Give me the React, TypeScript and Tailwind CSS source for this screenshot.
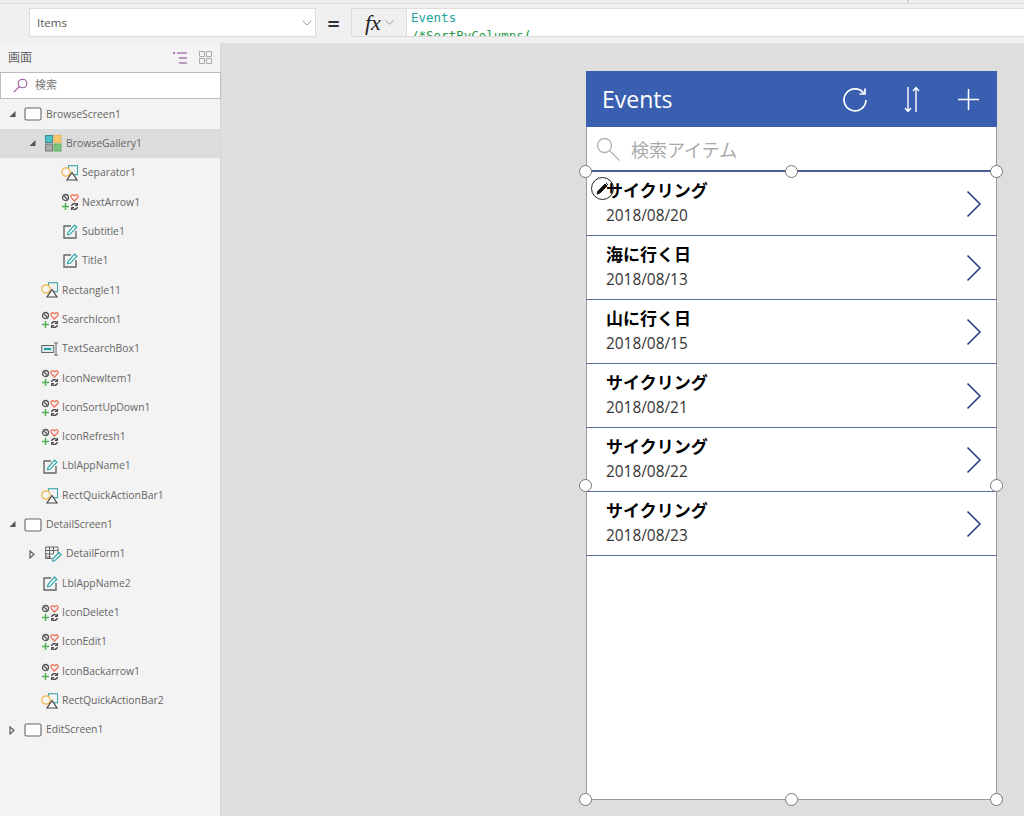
import React from 'react';
import { ChevronDown } from 'lucide-react';

type Kind = 'screen' | 'gallery' | 'shapes' | 'icons' | 'label' | 'input' | 'form';

type TreeItem = {
  name: string;
  kind: Kind;
  level: 0 | 1 | 2;
  caret?: 'open' | 'closed';
  selected?: boolean;
};

const treeItems: TreeItem[] = [
  { name: 'BrowseScreen1', kind: 'screen', level: 0, caret: 'open' },
  { name: 'BrowseGallery1', kind: 'gallery', level: 1, caret: 'open', selected: true },
  { name: 'Separator1', kind: 'shapes', level: 2 },
  { name: 'NextArrow1', kind: 'icons', level: 2 },
  { name: 'Subtitle1', kind: 'label', level: 2 },
  { name: 'Title1', kind: 'label', level: 2 },
  { name: 'Rectangle11', kind: 'shapes', level: 1 },
  { name: 'SearchIcon1', kind: 'icons', level: 1 },
  { name: 'TextSearchBox1', kind: 'input', level: 1 },
  { name: 'IconNewItem1', kind: 'icons', level: 1 },
  { name: 'IconSortUpDown1', kind: 'icons', level: 1 },
  { name: 'IconRefresh1', kind: 'icons', level: 1 },
  { name: 'LblAppName1', kind: 'label', level: 1 },
  { name: 'RectQuickActionBar1', kind: 'shapes', level: 1 },
  { name: 'DetailScreen1', kind: 'screen', level: 0, caret: 'open' },
  { name: 'DetailForm1', kind: 'form', level: 1, caret: 'closed' },
  { name: 'LblAppName2', kind: 'label', level: 1 },
  { name: 'IconDelete1', kind: 'icons', level: 1 },
  { name: 'IconEdit1', kind: 'icons', level: 1 },
  { name: 'IconBackarrow1', kind: 'icons', level: 1 },
  { name: 'RectQuickActionBar2', kind: 'shapes', level: 1 },
  { name: 'EditScreen1', kind: 'screen', level: 0, caret: 'closed' },
];

const events = [
  { title: 'サイクリング', date: '2018/08/20' },
  { title: '海に行く日', date: '2018/08/13' },
  { title: '山に行く日', date: '2018/08/15' },
  { title: 'サイクリング', date: '2018/08/21' },
  { title: 'サイクリング', date: '2018/08/22' },
  { title: 'サイクリング', date: '2018/08/23' },
];

const TreeIcon = ({ kind }: { kind: Kind }) => {
  if (kind === 'screen') {
    return (
      <svg width="18" height="14" viewBox="0 0 18 14">
        <rect x="1" y="1" width="16" height="12" rx="1.5" fill="#fff" stroke="#666" strokeWidth="1.1" />
      </svg>
    );
  }
  if (kind === 'gallery') {
    return (
      <svg width="17" height="17" viewBox="0 0 17 17">
        <rect x="0.5" y="0.5" width="7" height="7" fill="#4fc0c4" stroke="#3c8f94" />
        <rect x="9" y="0.5" width="7" height="7" fill="#f8c66e" stroke="#e9b658" />
        <rect x="0.5" y="9" width="7" height="7" fill="#a9a9a9" stroke="#777" />
        <rect x="9" y="9" width="7" height="7" fill="#7cc47f" stroke="#64ae68" />
      </svg>
    );
  }
  if (kind === 'shapes') {
    return (
      <svg width="18" height="16" viewBox="0 0 18 16">
        <rect x="7.5" y="0.7" width="9" height="9" fill="none" stroke="#3fa5a8" strokeWidth="1.1" />
        <circle cx="5" cy="7" r="4.2" fill="#f6f6f6" stroke="#f3b54a" strokeWidth="1.2" />
        <path d="M11 7.5 L16 15 H6 Z" fill="#f6f6f6" stroke="#444" strokeWidth="1.2" />
      </svg>
    );
  }
  if (kind === 'icons') {
    return (
      <svg width="18" height="18" viewBox="0 0 18 18">
        <circle cx="4.5" cy="4.5" r="3" fill="none" stroke="#555" strokeWidth="1.3" />
        <path d="M2.5 2.5 L6.5 6.5" stroke="#555" strokeWidth="1.3" />
        <path d="M13.5 8 L10.3 4.6 C9 3 10.8 1 12.4 1.9 L13.5 2.7 L14.6 1.9 C16.2 1 18 3 16.7 4.6 Z" fill="none" stroke="#ee6a4d" strokeWidth="1.2" />
        <path d="M4.5 10 V17 M1 13.5 H8" stroke="#4caf50" strokeWidth="1.4" />
        <path d="M10.5 13 C11 10.5 14.5 10 16 11.5 M16.5 14 C16 16.5 12.5 17 11 15.5" fill="none" stroke="#444" strokeWidth="1.3" />
        <path d="M16.5 10 V12.5 H14 M10.5 17 V14.5 H13" fill="none" stroke="#444" strokeWidth="1" />
      </svg>
    );
  }
  if (kind === 'label') {
    return (
      <svg width="15" height="15" viewBox="0 0 15 15">
        <path d="M8 2 H1 V14 H13 V7" fill="none" stroke="#666" strokeWidth="1.4" />
        <path d="M4.5 10.8 L5 8.5 L11.5 1.2 L13.8 3.2 L7 10.3 Z" fill="#fff" stroke="#2aa3a5" strokeWidth="1.2" />
      </svg>
    );
  }
  if (kind === 'input') {
    return (
      <svg width="18" height="14" viewBox="0 0 18 14">
        <rect x="0.7" y="3.5" width="12" height="7" fill="#d9ecec" stroke="#666" strokeWidth="1" />
        <path d="M3 7 H10" stroke="#2a9fa1" strokeWidth="2" />
        <path d="M13 1 H17 M15 1 V13 M13 13 H17" fill="none" stroke="#555" strokeWidth="0.9" />
      </svg>
    );
  }
  return (
    <svg width="17" height="16" viewBox="0 0 17 16">
      <path d="M0.7 1 H13 V7 M0.7 1 V12.5 H7 M0.7 4.5 H13 M0.7 8 H8 M0.7 11 H6 M4.5 1 V12 M8.5 1 V8" fill="none" stroke="#666" strokeWidth="1" />
      <path d="M7.5 15 L8 12.5 L14 6.5 L16.2 8.5 L10 14.5 Z" fill="#f3f3f3" stroke="#2aa3a5" strokeWidth="1.1" />
    </svg>
  );
};

const Caret = ({ state }: { state: 'open' | 'closed' }) =>
  state === 'open' ? (
    <svg width="8" height="8" viewBox="0 0 8 8">
      <path d="M7.5 1 V7 H1.5 Z" fill="#555" />
    </svg>
  ) : (
    <svg width="8" height="9" viewBox="0 0 8 9">
      <path d="M2 1 L6 4.5 L2 8 Z" fill="#f3f3f3" stroke="#555" strokeWidth="1.1" />
    </svg>
  );

const TreeRow = ({ item }: { item: TreeItem }) => {
  const isWide = item.kind === 'gallery' || item.kind === 'form';
  const pad = item.level === 0 ? 'pl-[24px]' : item.level === 2 ? 'pl-[61px]' : isWide ? 'pl-[44px]' : 'pl-[41px]';
  const gap = item.level === 0 || isWide ? 'gap-[4px]' : 'gap-[3px]';
  return (
    <div className={`relative flex h-[29.33px] items-center ${gap} ${pad} ${item.selected ? 'bg-[#dcdcdc]' : ''}`}>
      {item.caret && (
        <span className={`absolute top-[10px] ${item.level === 0 ? 'left-[8px]' : 'left-[28px]'}`}>
          <Caret state={item.caret} />
        </span>
      )}
      <span className="flex w-[18px] shrink-0 justify-center">
        <TreeIcon kind={item.kind} />
      </span>
      <span className="text-[10.4px] text-[#666]">{item.name}</span>
    </div>
  );
};

const Sidebar = () => (
  <aside className="w-[221px] shrink-0 border-r border-[#d8d8d8] bg-[#f3f3f3]">
    <div className="flex h-[29px] items-center justify-between px-[8px]">
      <span className="text-[12px] text-[#666]">画面</span>
      <div className="flex items-center gap-[11px]">
        <svg width="16" height="14" viewBox="0 0 16 14">
          <path d="M1 2 H3" stroke="#8b3a8f" strokeWidth="1.4" />
          <path d="M5 2 H15 M7 7 H15 M7 12 H15" stroke="#8b3a8f" strokeWidth="1.1" />
        </svg>
        <svg width="13" height="13" viewBox="0 0 13 13">
          <path d="M0.5 0.5 H5.5 V5.5 H0.5 Z M7.5 0.5 H12.5 V5.5 H7.5 Z M0.5 7.5 H5.5 V12.5 H0.5 Z M7.5 7.5 H12.5 V12.5 H7.5 Z" fill="none" stroke="#aaa" />
        </svg>
      </div>
    </div>
    <div className="flex h-[27px] w-[221px] items-center gap-[7px] border border-[#bcbcbc] bg-white pl-[12px]">
      <svg width="15" height="15" viewBox="0 0 15 15">
        <circle cx="9.5" cy="5.5" r="4.3" fill="none" stroke="#9b5a9e" strokeWidth="1.1" />
        <path d="M6.3 8.7 L0.8 14.2" stroke="#9b5a9e" strokeWidth="1.2" />
      </svg>
      <span className="text-[11px] text-[#777]">検索</span>
    </div>
    <div className="pt-[0.7px]">
      {treeItems.map((item) => (
        <TreeRow key={item.name} item={item} />
      ))}
    </div>
  </aside>
);

const FormulaBar = () => (
  <div className="h-[43px] shrink-0 bg-[#f0f0f0]">
    {/* Ribbon edge above the bar */}
    <div className="h-[4px] border-b border-[#dcdcdc] bg-[#eeeeee]">
      <div className="ml-[907px] h-[3px] w-[2px] bg-[#d6d6d6]" />
    </div>
    <div className="mt-[4px] flex h-[29px] items-stretch pl-[29px]">
      <div className="flex w-[287px] items-center justify-between border border-[#dcdcdc] bg-white pl-[7px]">
        <span className="pt-[1px] text-[11.5px] text-[#555]">Items</span>
        <ChevronDown size={16} strokeWidth={1.1} color="#777" />
      </div>
      <span className="flex w-[35px] items-center justify-center text-[22px] font-semibold leading-none text-[#333]">=</span>
      <div className="flex w-[56px] items-center gap-[1px] border border-[#dcdcdc] bg-[#f0f0f0] pl-[13px]">
        <span className="text-[22px] italic leading-none text-[#222] [font-family:'Liberation_Serif',serif]">fx</span>
        <ChevronDown size={15} strokeWidth={1.1} color="#777" />
      </div>
      <div className="flex-1 overflow-hidden border-y border-[#dcdcdc] bg-white pl-[4px] text-[12.5px] leading-[18px] [font-family:'DejaVu_Sans_Mono',monospace]">
        <div className="text-[#1ba39c]">Events</div>
        <div className="text-[#1f9a45]">/*SortByColumns(</div>
      </div>
    </div>
  </div>
);

const EventRow = ({ title, date }: { title: string; date: string }) => (
  <div className="flex h-[64px] items-center justify-between border-b border-[#5f6ea6] pl-[20px] pr-[15px]">
    <div>
      <div className="text-[17px] font-bold leading-[24px] text-black">{title}</div>
      <div className="text-[15.4px] leading-[25px] text-[#333]">{date}</div>
    </div>
    <svg width="16" height="28" viewBox="0 0 16 28" fill="none" stroke="#2b3f86" strokeWidth="1.6">
      <path d="M1.5 1.5 L14 14 L1.5 26.5" />
    </svg>
  </div>
);

const Handle = ({ className }: { className: string }) => (
  <span className={`absolute h-[13px] w-[13px] rounded-full border-[1.5px] border-[#777] bg-white ${className}`} />
);

const PhoneScreen = () => (
  <div className="relative h-[729px] w-[411px] bg-white shadow-[inset_0_0_0_1px_#9a9a9a]">
    <div className="flex h-[56px] items-center justify-between bg-[#3b5fb0] pl-[16px] pr-[18px] text-white">
      <span className="text-[23px]">Events</span>
      <div className="flex items-center">
        <svg className="mt-[2px]" width="26" height="26" viewBox="0 0 26 26" fill="none" stroke="white" strokeWidth="1.7">
          <path d="M22 6.5 A11 11 0 1 0 24 13" />
          <path d="M23 1.5 V7 H17.5" />
        </svg>
        <svg className="ml-[36px]" width="16" height="27" viewBox="0 0 16 27" fill="none" stroke="white" strokeWidth="1.4">
          <path d="M4 1 V25 M1 22 L4 25.5 L7 22 M12 26 V2 M9 5 L12 1.5 L15 5" />
        </svg>
        <svg className="ml-[38px]" width="21" height="21" viewBox="0 0 21 21" fill="none" stroke="white" strokeWidth="1.5">
          <path d="M10.5 0 V21 M0 10.5 H21" />
        </svg>
      </div>
    </div>
    <div className="flex h-[43px] items-center gap-[11px] pl-[10px]">
      <svg width="24" height="24" viewBox="0 0 24 24" fill="none" stroke="#b5b5b5" strokeWidth="1.4">
        <circle cx="8.5" cy="8.5" r="7" />
        <path d="M13.5 13.5 L23.5 23.5" />
      </svg>
      <span className="pt-[3px] text-[18px] text-[#aaa]">検索アイテム</span>
    </div>
    <div className="border-t-2 border-[#4b5c98]">
      {events.map((event, index) => (
        <EventRow key={index} title={event.title} date={event.date} />
      ))}
    </div>
    {/* Selection handles of the gallery */}
    <Handle className="-left-[7px] top-[94px]" />
    <Handle className="left-[199px] top-[94px]" />
    <Handle className="-right-[6px] top-[94px]" />
    <Handle className="-left-[7px] top-[408px]" />
    <Handle className="-right-[6px] top-[408px]" />
    <Handle className="-bottom-[6px] -left-[7px]" />
    <Handle className="-bottom-[6px] left-[199px]" />
    <Handle className="-bottom-[6px] -right-[6px]" />
    {/* Edit badge */}
    <span className="absolute left-[5px] top-[106px] flex h-[23px] w-[23px] items-center justify-center rounded-full border-[1.5px] border-[#222]">
      <svg width="13" height="13" viewBox="0 0 13 13">
        <path d="M1 12 L2 9 L9 2 L11 4 L4 11 Z M10 1 L12 3" fill="#111" stroke="#111" strokeWidth="1" />
      </svg>
    </span>
  </div>
);

export default function App() {
  return (
    <div className="flex h-[816px] w-[1024px] flex-col overflow-hidden bg-[#dedede] [font-family:'Open_Sans','Noto_Sans_CJK_JP',sans-serif]">
      <FormulaBar />
      <div className="flex min-h-0 flex-1">
        <Sidebar />
        <main className="flex-1 pl-[365px] pt-[28px]">
          <PhoneScreen />
        </main>
      </div>
    </div>
  );
}
